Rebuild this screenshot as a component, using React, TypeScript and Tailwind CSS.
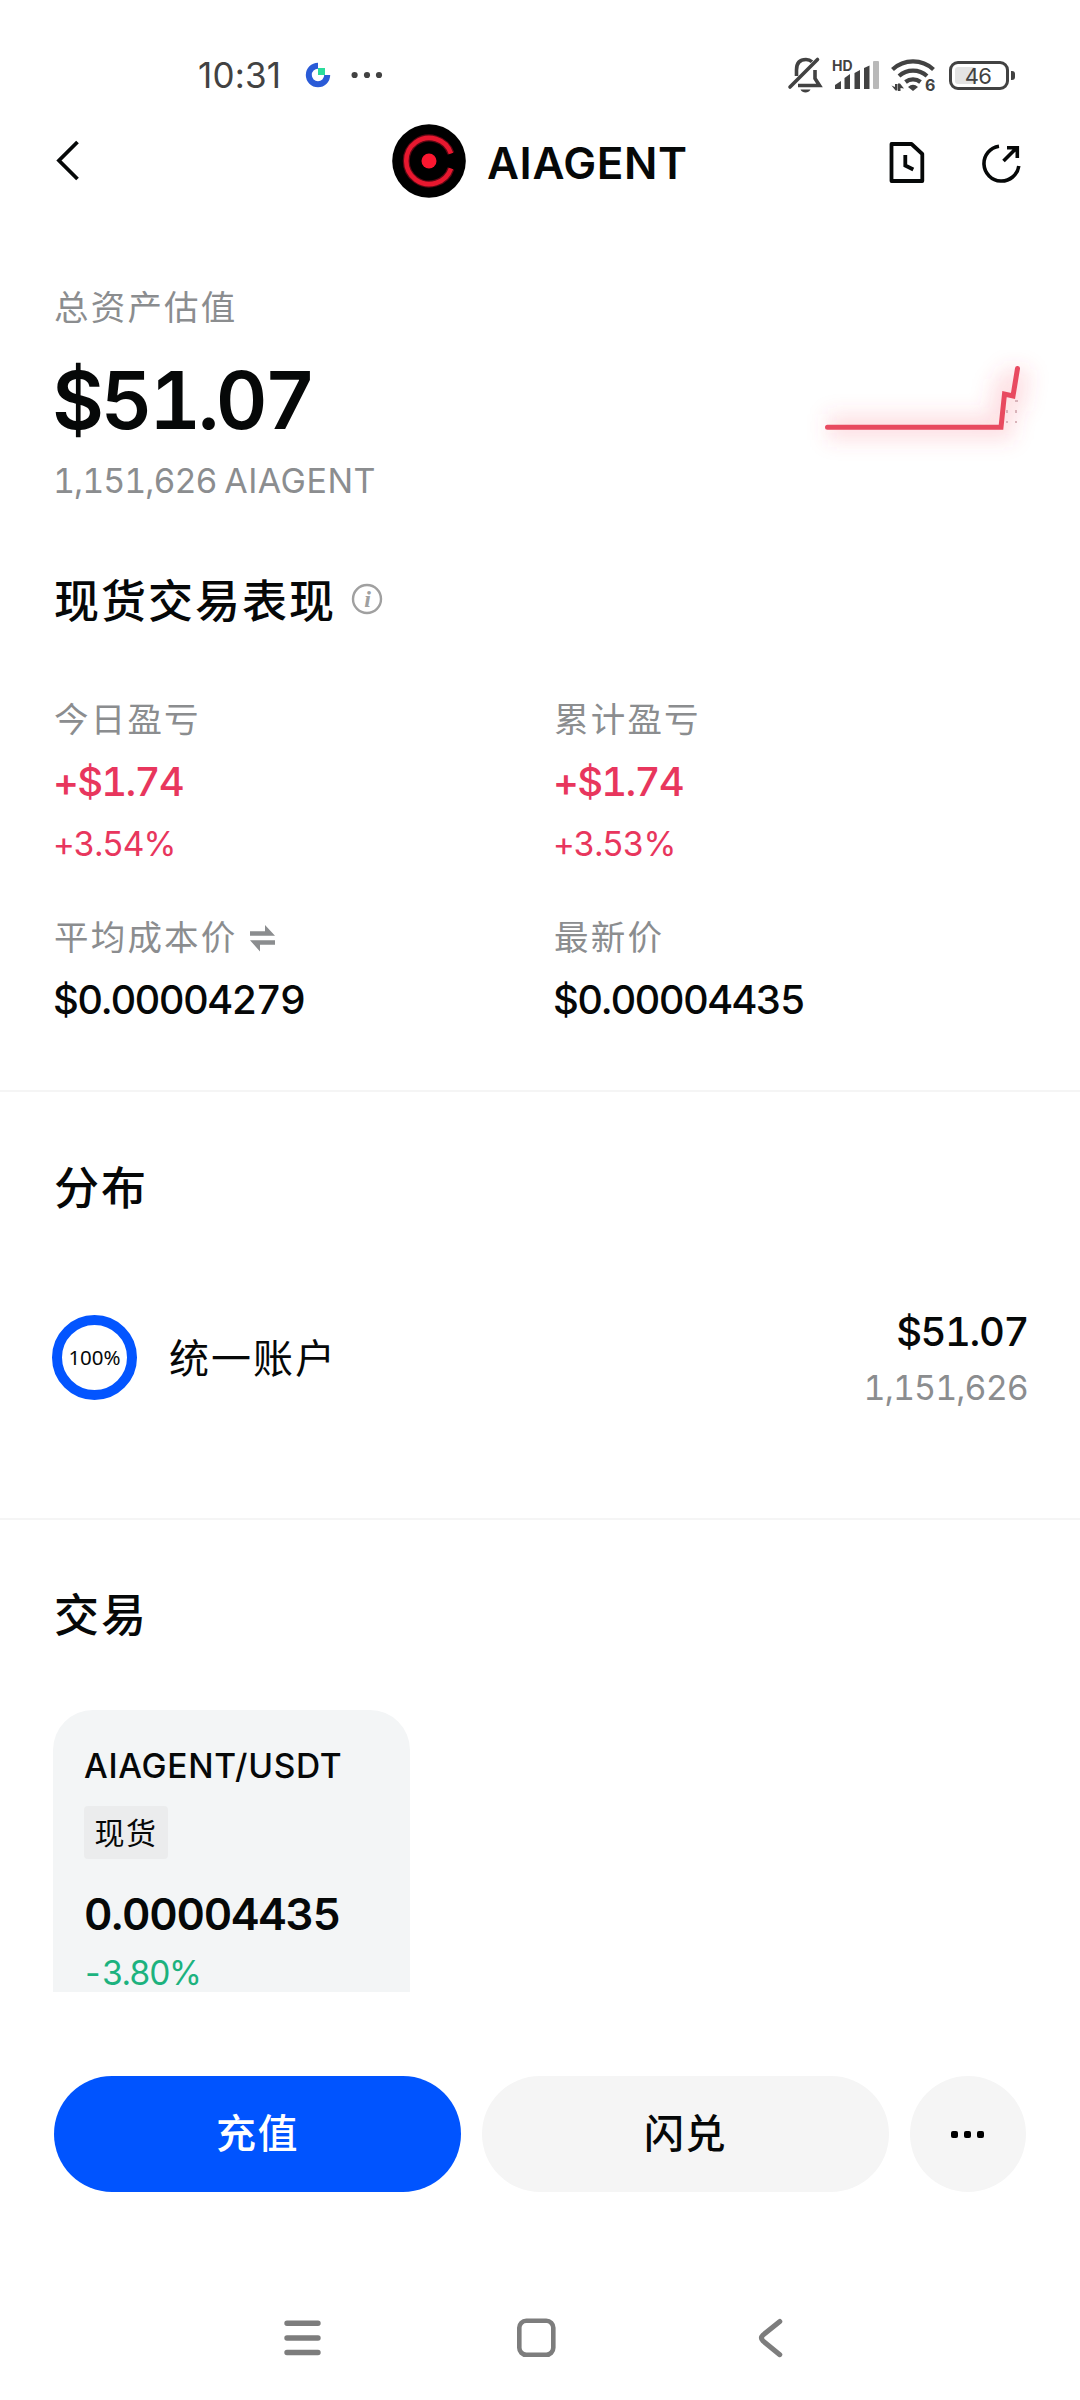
import type { ReactNode } from "react";
import clsx from "clsx";

type StatProps = {
  label: string;
  value: string;
  change?: string;
  icon?: ReactNode;
};

export default function App() {
  return (
    <div className="flex h-[2400px] w-[1080px] flex-col overflow-hidden bg-white font-['Inter','Noto_Sans_CJK_SC',sans-serif] text-[#060808]">
      <StatusBar />
      <Header />
      <Overview />
      <Performance />
      <Divider />
      <Distribution />
      <Divider />
      <Trade />
      <Actions />
      <SystemNav />
    </div>
  );
}

function StatusBar() {
  return (
    <div className="flex h-[100px] shrink-0 items-center pt-[50px] pl-[198px] text-[#424242]">
      <span className="w-[107px] text-[35px] leading-[50px] tracking-[0.2px]">10:31</span>
      <svg className="h-[26px] w-[26px]" viewBox="305 62 26 26" fill="none">
        <path d="M318 65.800a9.200 9.200 0 1 0 9.200 9.200" stroke="#2a5bd7" strokeWidth="6" />
        <rect x="318" y="68" width="7" height="7" fill="#2bdc9c" />
      </svg>
      <svg className="ml-[20px] h-[8px] w-[34px]" viewBox="351 71 34 8" fill="currentColor">
        <circle cx="354.6" cy="75" r="3.1" />
        <circle cx="367" cy="75" r="3.1" />
        <circle cx="379" cy="75" r="3.1" />
      </svg>
      <MutedBell />
      <Signal />
      <Wifi />
      <div className="relative ml-[7px] flex h-[29px] w-[60px] items-center justify-center rounded-[9px] border-[3px] border-current">
        <div className="absolute top-[3px] left-[3px] h-[17px] w-[21px] rounded-[3px] bg-[#e3e3e3]" />
        <span className="relative pt-[1px] pr-[2px] text-[22px] leading-none tracking-[-0.8px]">46</span>
        <div className="absolute top-[7px] -right-[9px] h-[9px] w-[4px] rounded-r-[3px] bg-current" />
      </div>
    </div>
  );
}

function MutedBell() {
  return (
    <svg className="ml-[402px] h-[38px] w-[36px]" viewBox="787 56 36 38" fill="none" stroke="currentColor" strokeWidth="3.6">
      <path d="M796.500 76V70c0-7 3.500-10.500 9.500-10.500 2.500 0 4.500.8 6 2.200M815 70v8.500l4.500 7H798" />
      <path d="M817.500 59.500L790 87" strokeLinecap="round" />
      <path d="M800.500 89.500h10c-1.200 2.200-2.800 3-5 3s-3.800-.8-5-3z" fill="currentColor" stroke="none" />
    </svg>
  );
}

function Signal() {
  return (
    <svg className="ml-[8px] h-[42px] w-[50px]" viewBox="831 54 50 42" fill="currentColor">
      <text x="832" y="70.500" className="font-['Inter'] text-[14px] font-bold">HD</text>
      <path d="M835 85l6-4v8h-6zM844.500 78l5.500-4v15h-5.500zM854.500 73l5.500-3v19h-5.500zM864 68l5.500-2.500V89H864z" />
      <rect x="873" y="61" width="6" height="28" rx="1" fill="#b9b9b9" />
    </svg>
  );
}

function Wifi() {
  return (
    <svg className="ml-[10px] h-[48px] w-[51px]" viewBox="891 51 51 48" fill="none" stroke="currentColor" strokeWidth="4.200">
      <path d="M892.500 69.500a30 30 0 0 1 41 0" />
      <path d="M899 76a21 21 0 0 1 28 0" />
      <path d="M905.500 82a12 12 0 0 1 15 0" />
      <path d="M908 87q5-4.500 10 0l-5 4z" fill="currentColor" stroke="none" />
      <path d="M891.500 85.500l4 5h2V84H895v3zM904 88.500l-4-5h-2V91h2.500v-3z" fill="currentColor" stroke="none" />
      <text x="925" y="91" className="font-['Inter'] text-[16px] font-bold" fill="currentColor" stroke="none">6</text>
    </svg>
  );
}

function Header() {
  return (
    <header className="flex h-[124px] shrink-0 items-start pt-[24px]">
      <svg className="mt-[14px] ml-[54px] h-[44px] w-[28px]" viewBox="54 138 28 44" fill="none" stroke="currentColor" strokeWidth="3.800">
        <path d="M77.500 142L59 160.500 77.500 179" />
      </svg>
      <div className="ml-[310px] flex w-[490px] items-start">
        <svg className="h-[74px] w-[74px]" viewBox="0 0 74 74" fill="none">
          <circle cx="37" cy="37" r="36.800" fill="#000" />
          <path d="M59 29.500a23 23 0 1 0 0 15" stroke="#5c0713" strokeWidth="7" />
          <path d="M59 29.500a23 23 0 1 0 0 15" stroke="#e8182f" strokeWidth="4.600" />
          <circle cx="37" cy="37" r="7.500" fill="#fb1730" />
        </svg>
        <h1 className="ml-[21px] pt-[2px] text-[44px] leading-[74px] font-semibold tracking-[0.600px]">AIAGENT</h1>
      </div>
      <svg className="mt-[16px] ml-[6px] h-[44px] w-[38px]" viewBox="888 140 38 44" fill="none" stroke="currentColor" strokeWidth="3.800">
        <path d="M891.500 144H911.500L922.300 154V181H891.500z" strokeLinejoin="round" />
        <path d="M905.300 155v10.500l8 4" />
      </svg>
      <svg className="mt-[16px] ml-[54px] h-[44px] w-[44px]" viewBox="980 140 44 44" fill="none" stroke="currentColor" strokeWidth="3.600">
        <path d="M999 146.200a17.500 17.500 0 1 0 19.800 19.800" />
        <path d="M1003.500 161L1016.500 148M1007 147.800H1017.300V158" />
      </svg>
    </header>
  );
}

function Overview() {
  return (
    <section className="flex shrink-0 justify-between pt-[60px] pl-[54px]">
      <div>
        <Label>总资产估值</Label>
        <p className="mt-[22px] -ml-[2px] text-[80px] leading-[92px] font-semibold tracking-[-3.300px] tabular-nums">$51.07</p>
        <p className="mt-[11px] -ml-[1px] text-[34px] leading-[48px] tracking-[0.500px] text-[#8b8d8f] tabular-nums [word-spacing:-2px]">
          <span className="tracking-[-1px]">1,151,626</span> AIAGENT
        </p>
      </div>
      <Sparkline />
    </section>
  );
}

function Sparkline() {
  const points = "827.500,427.300 1001,427.300 1004.500,394 1013,396 1017.500,368.500";
  return (
    <svg className="mt-[66px] h-[120px] w-[280px] shrink-0" viewBox="800 350 280 120" fill="none">
      <defs>
        <filter id="glow" x="-30%" y="-80%" width="160%" height="260%">
          <feGaussianBlur stdDeviation="10" />
        </filter>
      </defs>
      <polyline points={points} stroke="#f5475f" strokeOpacity="0.170" strokeWidth="26" filter="url(#glow)" />
      <polyline points={points} stroke="#e84a60" strokeWidth="5" strokeLinecap="round" />
      <g fill="#d9b4ba">
        <rect x="1006" y="410" width="2" height="3" />
        <rect x="1015" y="400" width="3" height="2" />
        <rect x="1015" y="410" width="2" height="3" />
        <rect x="1006" y="421" width="2" height="2" />
        <rect x="1015" y="421" width="2" height="2" />
      </g>
    </svg>
  );
}

function Performance() {
  return (
    <section className="h-[585px] shrink-0 px-[54px] pt-[67px]">
      <div className="flex items-center">
        <Heading>现货交易表现</Heading>
        <svg className="ml-[15px] h-[32px] w-[32px] -translate-y-[3px]" viewBox="0 0 32 32" fill="none">
          <circle cx="16" cy="16" r="14" stroke="#a0a0a0" strokeWidth="2.400" />
          <text x="16.500" y="24" textAnchor="middle" className="font-['Liberation_Serif'] text-[24px] font-bold italic" fill="#a0a0a0">i</text>
        </svg>
      </div>
      <div className="mt-[64px] grid grid-cols-[500px_1fr] gap-y-[45px]">
        <Stat label="今日盈亏" value="+$1.74" change="+3.54%" />
        <Stat label="累计盈亏" value="+$1.74" change="+3.53%" />
        <Stat label="平均成本价" value="$0.00004279" icon={<SwapIcon />} />
        <Stat label="最新价" value="$0.00004435" />
      </div>
    </section>
  );
}

function Stat({ label, value, change, icon }: StatProps) {
  return (
    <div>
      <div className="flex items-center">
        <Label>{label}</Label>
        {icon}
      </div>
      <p
        className={clsx(
          "mt-[12px] -ml-[1px] text-[40px] leading-[52px] font-medium tracking-[-1.700px] tabular-nums",
          change && "text-[#e8365d]"
        )}
      >
        {value}
      </p>
      {change && (
        <p className="mt-[12px] mb-[1px] -ml-[1px] text-[33.500px] leading-[48px] tracking-[-1.100px] text-[#e8365d] tabular-nums">{change}</p>
      )}
    </div>
  );
}

function SwapIcon() {
  return (
    <svg className="ml-[11px] h-[28px] w-[28px]" viewBox="0 0 28 28" fill="#8b8d8f">
      <path d="M1 7.200h15V1l10 10.700H1zM26 16.300v4.500H11v6.700L1 16.300z" />
    </svg>
  );
}

function Distribution() {
  return (
    <section className="h-[426px] shrink-0 px-[54px] pt-[67px]">
      <Heading>分布</Heading>
      <div className="mt-[85px] flex items-center">
        <div className="mb-[5px] -ml-[2px] flex h-[85px] w-[85px] items-center justify-center rounded-full border-[10.500px] border-[#0355ff] font-['Noto_Sans'] text-[20.500px] leading-none">
          <span className="shrink-0">100%</span>
        </div>
        <span className="mb-[2px] ml-[32px] text-[40px] leading-[56px] tracking-[2px]">统一账户</span>
        <div className="ml-auto text-right tabular-nums">
          <p className="-mr-[2px] text-[40px] leading-[56px] font-medium tracking-[-1.400px]">$51.07</p>
          <p className="-mr-[2px] text-[34px] leading-[56px] tracking-[-0.900px] text-[#8b8d8f]">1,151,626</p>
        </div>
      </div>
    </section>
  );
}

function Trade() {
  return (
    <section className="h-[556px] shrink-0 pt-[66px] pl-[54px]">
      <Heading>交易</Heading>
      <div className="mt-[64px] -ml-[1px] h-[282px] w-[357px] rounded-t-[40px] bg-[#f3f5f6] px-[31px] pt-[34px]">
        <p className="text-[33.500px] leading-[44px] font-medium tracking-[0.700px]">AIAGENT/USDT</p>
        <span className="mt-[18px] flex h-[53px] w-[84px] items-center justify-center rounded-[4px] bg-[#ebeced] text-[30px] leading-none tracking-[1.500px]">
          现货
        </span>
        <p className="mt-[30px] text-[44px] leading-[50px] font-semibold tracking-[-1.200px] tabular-nums">0.00004435</p>
        <p className="mt-[12px] -ml-[2px] text-[33.500px] leading-[44px] tracking-[-1.800px] text-[#1cb27e] tabular-nums">-3.80%</p>
      </div>
    </section>
  );
}

function Actions() {
  return (
    <div className="flex h-[116px] shrink-0 gap-[21px] px-[54px] text-[40px] font-medium tracking-[1.500px]">
      <button className="flex-1 rounded-full bg-[#0054ff] text-white">充值</button>
      <button className="flex-1 rounded-full bg-[#f5f5f5]">闪兑</button>
      <button className="flex h-[116px] w-[116px] items-center justify-center gap-[6px] rounded-full bg-[#f5f5f5] pr-[2px]">
        <i className="h-[7px] w-[7px] rounded-[2px] bg-black" />
        <i className="h-[7px] w-[7px] rounded-[2px] bg-black" />
        <i className="h-[7px] w-[7px] rounded-[2px] bg-black" />
      </button>
    </div>
  );
}

function SystemNav() {
  return (
    <nav className="flex h-[208px] shrink-0 items-center pt-[83px] text-[#7d7d7d]">
      <svg className="ml-[282px] h-[44px] w-[40px]" viewBox="282 2316 40 44" stroke="currentColor" strokeWidth="5.400" strokeLinecap="round">
        <path d="M287 2323.300h31M287 2338h31M287 2352.500h31" />
      </svg>
      <svg className="ml-[193px] h-[44px] w-[44px]" viewBox="515 2316 44 44" fill="none" stroke="currentColor" strokeWidth="4.600">
        <rect x="519.300" y="2320.800" width="34" height="34" rx="7" />
      </svg>
      <svg className="ml-[197px] h-[44px] w-[30px]" viewBox="756 2316 30 44" fill="none" stroke="currentColor" strokeWidth="5" strokeLinecap="round">
        <path d="M779.800 2321.500L763 2335q-3 3 0 6l16.800 13.700" />
      </svg>
    </nav>
  );
}

function Label({ children }: { children: ReactNode }) {
  return <p className="text-[34.500px] leading-[48px] tracking-[2.200px] text-[#8b8d8f]">{children}</p>;
}

function Heading({ children }: { children: ReactNode }) {
  return <h2 className="text-[45px] leading-[60px] font-medium tracking-[2px]">{children}</h2>;
}

function Divider() {
  return <div className="h-[2px] shrink-0 bg-[#f5f5f5]" />;
}
